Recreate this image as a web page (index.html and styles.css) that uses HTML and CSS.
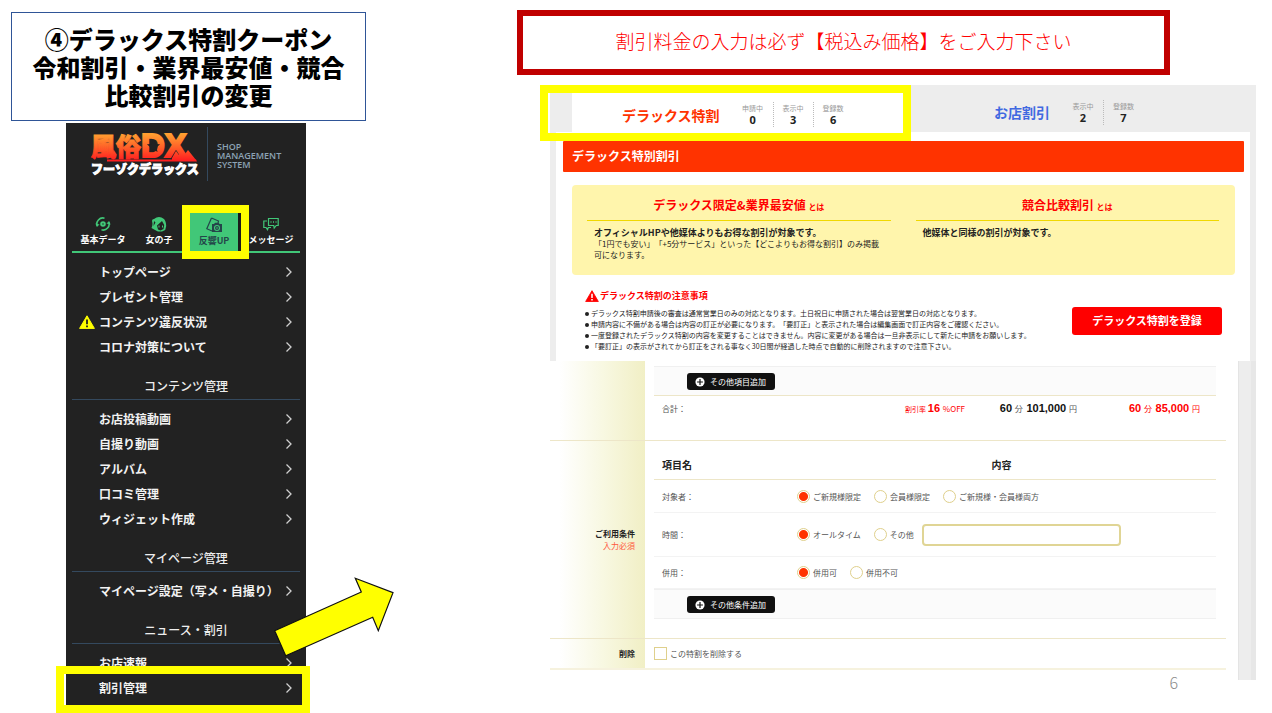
FILE: index.html
```html
<!DOCTYPE html>
<html lang="ja">
<head>
<meta charset="utf-8">
<meta name="viewport" content="width=device-width, initial-scale=1">
<title>デラックス特割クーポン</title>
<link rel="stylesheet" href="styles.css">
</head>
<body>
<svg class="defs" width="0" height="0" aria-hidden="true">
  <symbol id="chevron" viewBox="0 0 8 12"><path d="M1.5 1.5 6 6 1.5 10.500" fill="none" stroke="#d0d0d0" stroke-width="1.300"/></symbol>
  <symbol id="warn" viewBox="0 0 16 14"><path d="M8 .8 15.400 13.400H.6Z" fill="currentColor" stroke="currentColor" stroke-linejoin="round"/><path d="M8 4.500v4.800M8 10.500v1.700" stroke="var(--mark)" stroke-width="1.800"/></symbol>
  <symbol id="plus" viewBox="0 0 12 12"><circle cx="6" cy="6" r="5.500" fill="#fff"/><path d="M6 2.500v7M2.500 6h7" stroke="#111" stroke-width="1.400"/></symbol>
</svg>
<main class="slide">
  <section class="left">
    <h1 class="title">④デラックス特割クーポン<br>令和割引・業界最安値・競合<br>比較割引の変更</h1>
    <aside class="sidebar">
      <header class="brand">
        <svg class="logo" viewBox="0 0 110 48" role="img" aria-label="風俗DX フーゾクデラックス">
          <defs>
            <linearGradient id="fire" gradientUnits="userSpaceOnUse" x1="0" y1="3" x2="0" y2="29"><stop offset="0" stop-color="#ffa030"/><stop offset=".5" stop-color="#ff6228"/><stop offset="1" stop-color="#ff2020"/></linearGradient>
          </defs>
          <g fill="url(#fire)" stroke="url(#fire)">
            <text class="logo-kanji" x="1" y="25" stroke-width="1">風俗</text>
            <text class="logo-latin" x="51" y="26" stroke-width="2">DX</text>
            <path d="M82 27 86 20 89 24 92 18 95 23 98 19 106 29H82Z" stroke="none"/>
            <path d="M17 28.500H106L107 30.500H17Z" stroke="none"/>
          </g>
          <path d="m63.500 8.500 1.800 4.500 4.800.3-3.700 3.100 1.200 4.700-4.100-2.600-4.100 2.600 1.200-4.700-3.700-3.100 4.800-.3Z" fill="#222"/>
          <text class="logo-kana" x="1" y="43" fill="#fff" stroke="#fff" stroke-width="1">フーゾクデラックス</text>
        </svg>
        <p class="system">SHOP<br>MANAGEMENT<br>SYSTEM</p>
      </header>
      <nav class="tabs" aria-label="カテゴリ">
        <button class="tab" type="button">
          <svg class="tab-icon" viewBox="0 0 16 16" fill="none" stroke="currentColor" stroke-width="1.600"><circle cx="8" cy="8" r="1.800" stroke-width="2"/><path d="M2.300 10.200A6 6 0 0 1 9.500 2.200M13.700 5.800A6 6 0 0 1 6.500 13.800"/><path d="M.3 7.500 2 10.800l2.600-2.300ZM15.700 8.500 14 5.200l-2.600 2.300Z" fill="currentColor" stroke="none"/></svg>
          基本データ
        </button>
        <button class="tab" type="button">
          <svg class="tab-icon" viewBox="0 0 16 16"><path d="M3 3Q8-1 13 3q2 2 2.200 7l-1 4-3.200 1.500H7L4 14 .5 12Q2 9 1.200 6T3 3Z" fill="currentColor"/><path d="M6 9.500 11 5l2.200 4-.7 4-3 1.600-2.500-1.200ZM3 5l1.500 1.500L2.500 10" fill="#222"/><path d="M8 9.500v2M11.500 9.500v2" stroke="currentColor"/></svg>
          女の子
        </button>
        <button class="tab tab-active" type="button">
          <svg class="tab-icon" viewBox="0 0 16 16"><path d="M5.500 1 12.500 4 12 6M5.500 1 .8 11.800 6 14" fill="none" stroke="currentColor" stroke-width="1.200"/><path d="M6 7h2l1-1.200h3.600l1 1.200H16v8H6Z" fill="currentColor"/><circle cx="11" cy="11" r="2.500" fill="none" stroke="#41c778" stroke-width="1.100"/><circle cx="11" cy="11" r=".8" fill="#41c778"/></svg>
          反響UP
          <span class="frame"></span>
        </button>
        <button class="tab" type="button">
          <svg class="tab-icon" viewBox="0 0 16 16" fill="none" stroke="currentColor" stroke-width="1.200"><path d="M5.500 2.500h9.700v7h-2l-2 2.500-.5-2.500H5.500Z"/><path d="M4 5H.8v6.500h2.200l1.500 2.200.8-2.200H8"/><path d="M7.500 6h1M10 6h1M12.500 6h1" stroke-width="1.500"/></svg>
          メッセージ
        </button>
      </nav>
      <ul class="menu">
        <li><a href="#">トップページ<svg class="chev"><use href="#chevron"/></svg></a></li>
        <li><a href="#">プレゼント管理<svg class="chev"><use href="#chevron"/></svg></a></li>
        <li><a href="#"><svg class="menu-warn"><use href="#warn"/></svg>コンテンツ違反状況<svg class="chev"><use href="#chevron"/></svg></a></li>
        <li><a href="#">コロナ対策について<svg class="chev"><use href="#chevron"/></svg></a></li>
      </ul>
      <h2 class="group">コンテンツ管理</h2>
      <ul class="menu">
        <li><a href="#">お店投稿動画<svg class="chev"><use href="#chevron"/></svg></a></li>
        <li><a href="#">自撮り動画<svg class="chev"><use href="#chevron"/></svg></a></li>
        <li><a href="#">アルバム<svg class="chev"><use href="#chevron"/></svg></a></li>
        <li><a href="#">口コミ管理<svg class="chev"><use href="#chevron"/></svg></a></li>
        <li><a href="#">ウィジェット作成<svg class="chev"><use href="#chevron"/></svg></a></li>
      </ul>
      <h2 class="group">マイページ管理</h2>
      <ul class="menu">
        <li><a href="#">マイページ設定（写メ・自撮り）<svg class="chev"><use href="#chevron"/></svg></a></li>
      </ul>
      <h2 class="group">ニュース・割引</h2>
      <ul class="menu">
        <li><a href="#">お店速報<svg class="chev"><use href="#chevron"/></svg></a></li>
        <li><a href="#">割引管理<svg class="chev"><use href="#chevron"/></svg></a><span class="frame frame-row"></span></li>
      </ul>
      <svg class="arrow" viewBox="0 0 122 82" aria-hidden="true"><path d="M2.700 54.700 89.300 16 83.300 2.300 121 16.700 106.300 54.700 100.700 41.300 13.700 79.700Z" fill="#ff0" stroke="#111" stroke-width="1.200"/></svg>
    </aside>
  </section>

  <section class="right">
    <p class="notice">割引料金の入力は必ず【税込み価格】をご入力下さい</p>
    <div class="panel">
      <div class="overview">
        <div class="switch">
          <a class="kind kind-on" href="#"><b class="kind-name">デラックス特割</b>
            <span class="stat">申請中<b>0</b></span><span class="stat">表示中<b>3</b></span><span class="stat">登録数<b>6</b></span>
            <span class="frame frame-kind"></span></a>
          <a class="kind kind-off" href="#"><b class="kind-name">お店割引</b>
            <span class="stat">表示中<b>2</b></span><span class="stat">登録数<b>7</b></span></a>
        </div>
        <div class="sheet">
          <h2 class="bar">デラックス特別割引</h2>
          <div class="about">
            <section class="about-item">
              <h3>デラックス限定&amp;業界最安値 <small>とは</small></h3>
              <p><b>オフィシャルHPや他媒体よりもお得な割引が対象です。</b><br>「1円でも安い」「+5分サービス」といった【どこよりもお得な割引】のみ掲載可になります。</p>
            </section>
            <section class="about-item">
              <h3>競合比較割引 <small>とは</small></h3>
              <p><b>他媒体と同様の割引が対象です。</b></p>
            </section>
          </div>
          <div class="caution">
            <div>
              <h3><svg class="caution-icon"><use href="#warn"/></svg>デラックス特割の注意事項</h3>
              <ul>
                <li>デラックス特割申請後の審査は通常営業日のみの対応となります。土日祝日に申請された場合は翌営業日の対応となります。</li>
                <li>申請内容に不備がある場合は内容の訂正が必要になります。「要訂正」と表示された場合は編集画面で訂正内容をご確認ください。</li>
                <li>一度登録されたデラックス特割の内容を変更することはできません。内容に変更がある場合は一旦非表示にして新たに申請をお願いします。</li>
                <li>「要訂正」の表示がされてから訂正をされる事なく30日間が経過した時点で自動的に削除されますので注意下さい。</li>
              </ul>
            </div>
            <button class="register" type="button">デラックス特割を登録</button>
          </div>
        </div>
      </div>

      <form class="form">
        <div class="block">
          <div class="label"></div>
          <div class="fields fields-price">
            <div class="add"><button type="button"><svg><use href="#plus"/></svg>その他項目追加</button></div>
            <div class="total">
              <span>合計：</span>
              <span class="red"><small>割引率</small> <b>16</b> %OFF</span>
              <span class="dark"><b>60</b> 分&nbsp; <b>101,000</b> 円</span>
              <span class="red"><b>60</b> 分&nbsp; <b>85,000</b> 円</span>
            </div>
          </div>
        </div>
        <div class="block">
          <div class="label"><b>ご利用条件</b><span>入力必須</span></div>
          <div class="fields fields-terms">
            <div class="row head"><b>項目名</b><b class="head-center">内容</b></div>
            <div class="row row-who">
              <span>対象者：</span>
              <div class="options">
                <label><input type="radio" name="who" checked>ご新規様限定</label>
                <label><input type="radio" name="who">会員様限定</label>
                <label><input type="radio" name="who">ご新規様・会員様両方</label>
              </div>
            </div>
            <div class="row row-time">
              <span>時間：</span>
              <div class="options">
                <label><input type="radio" name="time" checked>オールタイム</label>
                <label><input type="radio" name="time">その他</label>
                <input class="text" type="text" aria-label="その他の時間">
              </div>
            </div>
            <div class="row row-use">
              <span>併用：</span>
              <div class="options">
                <label><input type="radio" name="use" checked>併用可</label>
                <label><input type="radio" name="use">併用不可</label>
              </div>
            </div>
            <div class="add"><button type="button"><svg><use href="#plus"/></svg>その他条件追加</button></div>
          </div>
        </div>
        <div class="block block-last">
          <div class="label"><b>削除</b></div>
          <div class="fields fields-delete"><label><input type="checkbox">この特割を削除する</label></div>
        </div>
      </form>
      <span class="page-number">6</span>
    </div>
  </section>
</main>
</body>
</html>
```
FILE: styles.css
```css
* { box-sizing: border-box; }
body { min-height: 100vh; margin: 0; background: #fff; color: #222; font-family: "Noto Sans CJK JP", "Open Sans", sans-serif; font-size: 8px; text-spacing-trim: space-all; }
h1, h2, h3, p, ul { margin: 0; padding: 0; }
ul { list-style: none; }
a { color: inherit; text-decoration: none; }
button, input { margin: 0; font-family: inherit; }
.defs { position: absolute; }

.slide { display: grid; grid-template-columns: 355px minmax(0, 1fr); column-gap: 151px; padding: 10px 16px 0 11px; align-items: start; }

.frame { position: absolute; inset: -8px; border: 8px solid #ff0; pointer-events: none; z-index: 2; }

/* left column */
.left { padding-top: 2px; }
.title { border: 1px solid #2f5597; padding: 12px 0 11px; text-align: center; font-size: 24px; line-height: 28px; font-weight: 900; color: #000; }
.sidebar { position: relative; width: 240px; margin: 2px 0 0 55px; padding: 4px 6px 6px; background: #222; color: #fff; }
.brand { display: flex; height: 54px; margin-bottom: 32px; }
.logo { width: 110px; height: 48px; margin: 4px 6px 0 18px; overflow: visible; }
.logo-kanji { font: 900 25px "Noto Sans CJK JP", sans-serif; }
.logo-latin { font: bold 33px "Liberation Sans", sans-serif; }
.logo-kana { font: 900 12px "Noto Sans CJK JP", sans-serif; }
.system { margin-left: 1px; padding: 15px 0 0 9px; border-left: 1px solid #34495e; color: #8da2b5; font: 600 9px/9px "Open Sans", sans-serif; }
.tabs { display: grid; grid-template-columns: repeat(4, 1fr); padding: 0 1px 0 3px; border-bottom: 2px solid #41c778; }
.tab { position: relative; display: flex; flex-direction: column; align-items: center; height: 38px; padding: 3px 0 0; border: 0; background: none; color: #fff; font-size: 9px; line-height: 16px; font-weight: bold; white-space: nowrap; }
.tab-icon { width: 16px; height: 16px; color: #41c778; }
.tab-active { margin: 0 2px 0 3px; padding-top: 4px; background: #41c778; border-right: 3px solid #1b1b1b; color: #24464a; }
.tab-active .tab-icon { color: #24464a; }
.tab-active .frame { right: -11px; }
.menu { padding-top: 6px; }
.menu li { position: relative; }
.menu a { display: flex; align-items: center; height: 25px; padding: 0 7px 0 27px; font-size: 12px; font-weight: bold; color: #f2f2f2; white-space: nowrap; }
.chev { width: 8px; height: 12px; margin-left: auto; }
.menu-warn { width: 16px; height: 14px; margin: 0 4px 0 -20px; color: #ff0; --mark: #222; }
.group { padding: 17px 0 3px; border-bottom: 1px solid #34495e; text-align: center; font-size: 12px; line-height: 20px; font-weight: 500; color: #eee; }
.frame-row { inset: -9px -10px -13px -16px; }
.arrow { position: absolute; right: -88px; bottom: 48px; width: 122px; height: 82px; z-index: 3; }

/* right column */
.notice { margin-right: 86px; border: 6px solid #c00000; padding: 11px 0 14px; text-align: center; color: #f00; font-size: 19px; line-height: 28px; font-weight: 300; }
.panel { position: relative; margin: 10px 0 0 33px; }
.overview { background: #ededed; padding: 0 6px; }
.switch { display: flex; height: 47px; padding-left: 16px; }
.kind { position: relative; display: flex; align-items: center; }
.kind-name { font-size: 14px; line-height: 20px; }
.kind-on { flex: 0 0 331px; height: 39px; margin-top: 8px; padding: 4px 0 0 50px; background: #fff; color: #ff3300; }
.kind-off { flex: 1; padding: 7px 0 0 91px; color: #4169e1; }
.kind-name { margin-right: 13px; }
.stat { width: 40px; border-left: 1px dotted #bbb; text-align: center; color: #999; font-size: 7px; line-height: 10px; padding: 1px 0; }
.kind-name + .stat { border-left: 0; }
.stat b { display: block; color: #222; font: bold 11px/13px "Open Sans", sans-serif; }
.frame-kind { inset: -8px -8px -9px -32px; }
.sheet { background: #fff; padding: 9px 6px 9px 7px; }
.bar { height: 31px; padding-left: 9px; border-radius: 1px; background: #ff3300; color: #fff; font-size: 12px; line-height: 30px; }
.about { display: grid; grid-template-columns: 1fr 1fr; column-gap: 25px; min-height: 90px; margin: 13px 9px 0; padding: 10px 16px 0 15px; border-radius: 4px; background: #fff5ac; }
.about-item h3 { border-bottom: 1px solid #f0d800; padding-bottom: 3px; text-align: center; color: #f00; font-size: 12px; line-height: 20px; }
.about-item small { font-size: 8px; }
.about-item p { padding: 6px 8px 0 7px; font-size: 8px; line-height: 11px; }
.about-item p b { font-size: 9px; }
.caution { display: flex; justify-content: space-between; align-items: flex-start; padding: 13px 22px 0; }
.caution h3 { display: flex; align-items: center; color: #f00; font-size: 9px; line-height: 16px; }
.caution-icon { width: 14px; height: 12px; margin-right: 1px; --mark: #fff; }
.caution ul { margin-top: 4px; }
.caution li { display: flex; align-items: center; font-size: 7px; line-height: 11px; white-space: nowrap; }
.caution li::before { content: ""; width: 4px; height: 4px; margin-right: 2px; border-radius: 50%; background: #222; }
.register { flex: none; width: 150px; height: 28px; margin-top: 19px; padding: 0 0 2px; border: 0; border-radius: 3px; background: #f00; color: #fff; font-size: 11px; font-weight: bold; }

/* form */
.form { background: linear-gradient(to left, #e7e7e7 5px, #ededed 5px, #ededed 17px, #e4e4e4 17px, #e4e4e4 18px, #fff 18px); padding: 0 30px 10px 0; }
.block { display: grid; grid-template-columns: 95px minmax(0, 1fr); border-bottom: 1px solid #ede6c8; }
.block-last { border-bottom: 2px solid #f6f2de; }
.label { display: flex; flex-direction: column; justify-content: center; align-items: flex-end; padding-right: 10px; background: linear-gradient(90deg, #fff 10%, #f8f8e2 55%, #f1efc5); font-size: 8px; line-height: 12px; color: #222; }
.label span { color: #ff5a40; }
.fields { margin: 0 10px 0 9px; color: #555; }
.fields-price { padding: 5px 0 20px; }
.fields-terms { padding: 8px 0 19px; }
.fields-delete { display: flex; align-items: center; height: 29px; }
.add { height: 30px; padding: 6px 33px; border-top: 1px solid #f0f0f0; border-bottom: 1px solid #f0f0f0; background: #fbfbfb; }
.fields-price .add { border-bottom: 1px solid #ede6c8; }
.add button { display: flex; align-items: center; gap: 5px; width: 88px; height: 17px; padding: 0 8px; border: 0; border-radius: 3px; background: #111; color: #fff; font-size: 8px; white-space: nowrap; }
.add svg { flex: none; width: 10px; height: 10px; }
.total { display: grid; grid-template-columns: 1fr 64px 112px 123px; height: 24px; align-items: center; padding: 0 16px 0 8px; text-align: right; white-space: nowrap; }
.total > :first-child { text-align: left; }
.total small { font-size: 7px; }
.total b { margin-right: 1px; font: bold 11px "Liberation Sans", sans-serif; }
.red { color: #f00; }
.dark b { color: #111; }
.row { display: grid; grid-template-columns: 135px minmax(0, 1fr); align-items: center; padding-left: 8px; border-bottom: 1px solid #f3f3f3; }
.head { height: 31px; border-bottom-color: #ede6c8; color: #222; font-size: 10px; }
.head-center { text-align: center; padding-right: 10px; }
.row-who { height: 33px; }
.row-time { height: 44px; }
.row-use { height: 32px; }
.options { display: flex; align-items: center; }
label { display: flex; align-items: center; gap: 3px; white-space: nowrap; }
.options label { margin-right: 13px; }
input[type="radio"], input[type="checkbox"] { appearance: none; width: 13px; height: 13px; border: 1px solid #dfd08c; background: #fff; }
input[type="radio"] { border-radius: 50%; }
input[type="radio"]:checked { background: radial-gradient(circle, #ff3300 4px, #fff 5px); }
.options label:has(+ .text) { margin-right: 8px; }
.text { width: 199px; height: 22px; border: 2px solid #e0d595; border-radius: 4px; background: #fff; }
.page-number { position: absolute; right: 78px; bottom: -12px; color: #8b8b8b; font-size: 16px; line-height: 20px; font-weight: 300; }
```
